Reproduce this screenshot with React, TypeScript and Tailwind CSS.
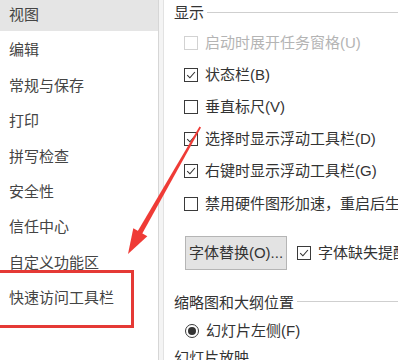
const menu = [
  "视图",
  "编辑",
  "常规与保存",
  "打印",
  "拼写检查",
  "安全性",
  "信任中心",
  "自定义功能区",
  "快速访问工具栏",
];

const options = [
  { label: "启动时展开任务窗格(U)", checked: false, disabled: true },
  { label: "状态栏(B)", checked: true },
  { label: "垂直标尺(V)", checked: false },
  { label: "选择时显示浮动工具栏(D)", checked: true },
  { label: "右键时显示浮动工具栏(G)", checked: true },
  { label: "禁用硬件图形加速，重启后生效(A)", checked: false },
];

function CheckBox({ checked, disabled }: { checked?: boolean; disabled?: boolean }) {
  return (
    <span
      className={`flex h-[14px] w-[14px] shrink-0 items-center justify-center border bg-white ${
        disabled ? "border-[#d2d2d2]" : "border-[#3a3a3a]"
      }`}
    >
      {checked && (
        <svg width="10" height="10" viewBox="0 0 10 10">
          <path d="M1.2 5.1 L3.9 7.8 L8.9 2" fill="none" stroke="#333" strokeWidth="1.1" />
        </svg>
      )}
    </span>
  );
}

function SectionTitle({ text }: { text: string }) {
  return (
    <div className="flex h-[28px] items-center gap-[3px] pl-[10px]">
      <span className="whitespace-nowrap text-[15px] leading-[20px] text-[#333]">{text}</span>
      <span className="mt-[-2px] h-px flex-1 bg-[#cfcfcf]" />
    </div>
  );
}

export default function App() {
  return (
    <div
      className="relative flex h-[360px] w-[398px] overflow-hidden bg-white"
      style={{ fontFamily: '"Liberation Sans", "Noto Sans CJK SC", sans-serif' }}
    >
      {/* left category list */}
      <nav className="flex w-[158px] shrink-0 flex-col gap-[3.4px] pt-0">
        {menu.map((item, i) => (
          <div
            key={item}
            className={`flex h-[32px] shrink-0 items-center pl-[9px] text-[15px] leading-[20px] text-[#444] ${
              i === 0 ? "-mt-[1px] bg-[#e5e5e5]" : ""
            }`}
          >
            {item}
          </div>
        ))}
      </nav>

      {/* divider */}
      <div className="w-px shrink-0 bg-[#d6d6d6]" />
      <div className="w-[4px] shrink-0 bg-[#f4f4f4]" />
      <div className="w-px shrink-0 bg-[#e2e2e2]" />

      {/* right options panel */}
      <main className="flex min-w-0 flex-1 flex-col pt-[3px]">
        <SectionTitle text="显示" />
        <div className="mt-[4px] flex flex-col">
          {options.map((o) => (
            <div key={o.label} className="flex h-[32.1px] items-center gap-[7px] pl-[20px]">
              <CheckBox checked={o.checked} disabled={o.disabled} />
              <span
                className={`whitespace-nowrap text-[15px] leading-[20px] ${
                  o.disabled ? "text-[#b4b4b4]" : "text-[#333]"
                }`}
              >
                {o.label}
              </span>
            </div>
          ))}
        </div>

        <div className="mt-[16px] flex items-center gap-[10px] pl-[21px]">
          <button className="h-[34px] w-[102px] shrink-0 border border-[#b5b5b5] bg-[#e3e3e3] text-[15px] leading-[20px] text-[#333]">
            字体替换(O)...
          </button>
          <CheckBox checked />
          <span className="-ml-[3px] whitespace-nowrap text-[15px] leading-[20px] text-[#333]">
            字体缺失提醒(M)
          </span>
        </div>

        <div className="mt-[19px]">
          <SectionTitle text="缩略图和大纲位置" />
        </div>
        <div className="mt-[4px] flex h-[36px] items-center gap-[7px] pl-[21px]">
          <span className="flex h-[14px] w-[14px] shrink-0 items-center justify-center rounded-full border border-[#3a3a3a] bg-white">
            <span className="h-[8px] w-[8px] rounded-full bg-[#333]" />
          </span>
          <span className="whitespace-nowrap text-[15px] leading-[20px] text-[#333]">幻灯片左侧(F)</span>
        </div>
        <div className="mt-[7px] whitespace-nowrap pl-[10px] text-[15px] leading-[20px] text-[#333]">
          幻灯片放映
        </div>
      </main>

      {/* annotation: red box */}
      <div className="absolute left-[-4px] top-[270px] h-[58px] w-[138px] border-[3px] border-[#e53935]" />

      {/* annotation: red arrow */}
      <svg className="pointer-events-none absolute left-0 top-0" width="398" height="360" viewBox="0 0 398 360">
        <polygon points="199.5,126.5 201,127.4 142,234 137.5,231.5" fill="#ef3b36" />
        <polygon points="128,254 133.3,228.3 147.3,236.2" fill="#ef3b36" />
      </svg>
    </div>
  );
}
